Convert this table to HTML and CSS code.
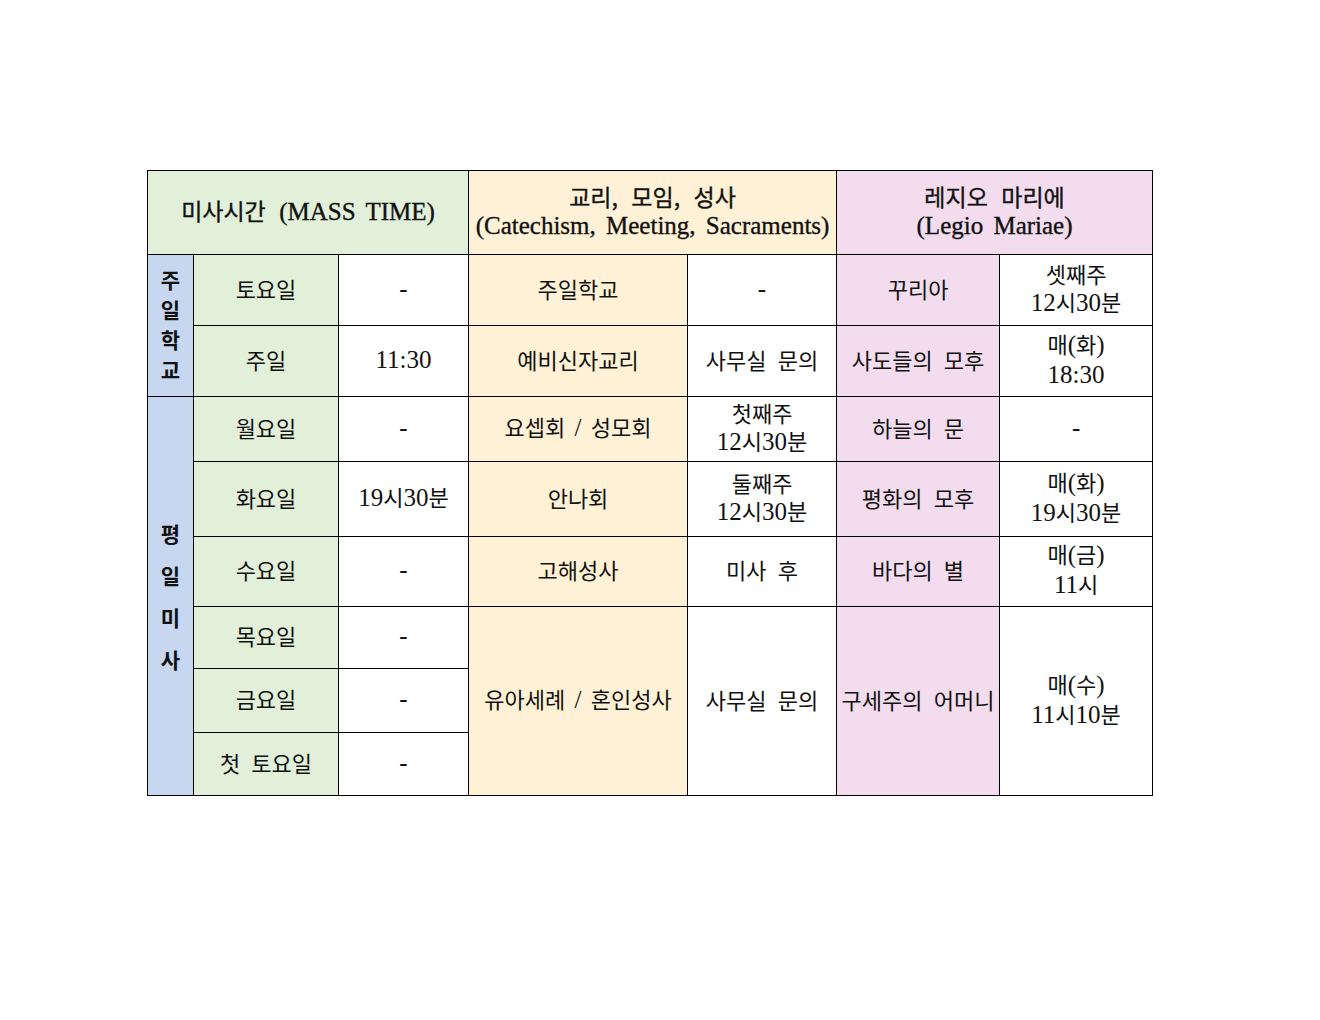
FILE: index.html
```html
<!DOCTYPE html>
<html lang="ko">
<head>
<meta charset="utf-8">
<title>미사시간</title>
<link rel="stylesheet" href="styles.css">
</head>
<body>
<div class="page">
<table class="sched">
  <colgroup>
    <col class="c0"><col class="c1"><col class="c2"><col class="c3"><col class="c4"><col class="c5"><col class="c6">
  </colgroup>
  <tr class="r-head">
    <th colspan="3" class="green">미사시간 <span class="n">(MASS TIME)</span></th>
    <th colspan="2" class="yellow">교리, 모임, 성사<br><span class="n">(Catechism, Meeting, Sacraments)</span></th>
    <th colspan="2" class="pink">레지오 마리에<br><span class="n">(Legio Mariae)</span></th>
  </tr>
  <tr class="r1">
    <td rowspan="2" class="blue vert v-sun">주<br>일<br>학<br>교</td>
    <td class="green">토요일</td>
    <td><span class="n">-</span></td>
    <td class="yellow">주일학교</td>
    <td><span class="n">-</span></td>
    <td class="pink">꾸리아</td>
    <td>셋째주<br><span class="n">12</span>시<span class="n">30</span>분</td>
  </tr>
  <tr class="r2">
    <td class="green">주일</td>
    <td><span class="n">11:30</span></td>
    <td class="yellow">예비신자교리</td>
    <td>사무실 문의</td>
    <td class="pink">사도들의 모후</td>
    <td>매<span class="n">(</span>화<span class="n">)</span><br><span class="n">18:30</span></td>
  </tr>
  <tr class="r3">
    <td rowspan="7" class="blue vert v-week">평<br>일<br>미<br>사</td>
    <td class="green">월요일</td>
    <td><span class="n">-</span></td>
    <td class="yellow">요셉회<span class="n"> / </span>성모회</td>
    <td>첫째주<br><span class="n">12</span>시<span class="n">30</span>분</td>
    <td class="pink">하늘의 문</td>
    <td><span class="n">-</span></td>
  </tr>
  <tr class="r4">
    <td class="green">화요일</td>
    <td><span class="n">19</span>시<span class="n">30</span>분</td>
    <td class="yellow">안나회</td>
    <td>둘째주<br><span class="n">12</span>시<span class="n">30</span>분</td>
    <td class="pink">평화의 모후</td>
    <td>매<span class="n">(</span>화<span class="n">)</span><br><span class="n">19</span>시<span class="n">30</span>분</td>
  </tr>
  <tr class="r5">
    <td class="green">수요일</td>
    <td><span class="n">-</span></td>
    <td class="yellow">고해성사</td>
    <td>미사 후</td>
    <td class="pink">바다의 별</td>
    <td>매<span class="n">(</span>금<span class="n">)</span><br><span class="n">11</span>시</td>
  </tr>
  <tr class="r6">
    <td class="green">목요일</td>
    <td><span class="n">-</span></td>
    <td rowspan="3" class="yellow">유아세례<span class="n"> / </span>혼인성사</td>
    <td rowspan="3">사무실 문의</td>
    <td rowspan="3" class="pink">구세주의 어머니</td>
    <td rowspan="3">매<span class="n">(</span>수<span class="n">)</span><br><span class="n">11</span>시<span class="n">10</span>분</td>
  </tr>
  <tr class="r7">
    <td class="green">금요일</td>
    <td><span class="n">-</span></td>
  </tr>
  <tr class="r8">
    <td class="green">첫 토요일</td>
    <td><span class="n">-</span></td>
  </tr>
</table>
</div>
</body>
</html>
```
FILE: styles.css
```css
html, body {
  margin: 0;
  padding: 0;
  background: #ffffff;
}
.page {
  padding: 170px 0 0 147px;
}
.sched {
  border-collapse: collapse;
  table-layout: fixed;
  width: 1005px;
  font-family: "Noto Sans CJK KR", "Liberation Serif", sans-serif;
  font-size: 22px;
  color: #111;
}
.c0 { width: 46px; }
.c1 { width: 145px; }
.c2 { width: 130px; }
.c3 { width: 219px; }
.c4 { width: 149px; }
.c5 { width: 163px; }
.c6 { width: 153px; }

.sched th, .sched td {
  border: 1px solid #000;
  padding: 0 0 5px 0;
  text-align: center;
  vertical-align: middle;
  line-height: 28px;
  white-space: nowrap;
  word-spacing: 5px;
}
.sched th {
  font-size: 23px;
  font-weight: normal;
  word-spacing: 7px;
  padding-bottom: 4px;
  -webkit-text-stroke: 0.35px #111;
}
.n {
  font-family: "Liberation Serif", serif;
  font-size: 25px;
  word-spacing: 3px;
}
.sched th .n {
  font-size: 25px;
  word-spacing: 4px;
}
.r-head { height: 84px; }
.r1 { height: 71px; }
.r2 { height: 71px; }
.r3 { height: 65px; }
.r4 { height: 75px; }
.r5 { height: 70px; }
.r6 { height: 62px; }
.r7 { height: 64px; }
.r8 { height: 63px; }

.green { background: #e2efd9; }
.yellow { background: #fff1d6; }
.pink { background: #f3dcee; }
.blue { background: #c6d7ef; }

.sched .vert {
  font-weight: bold;
  font-family: "Noto Sans CJK KR", sans-serif;
  font-size: 21px;
}
.sched .v-sun { line-height: 30px; padding-bottom: 4px; }
.sched .v-week { line-height: 42px; padding-bottom: 0; }
```
